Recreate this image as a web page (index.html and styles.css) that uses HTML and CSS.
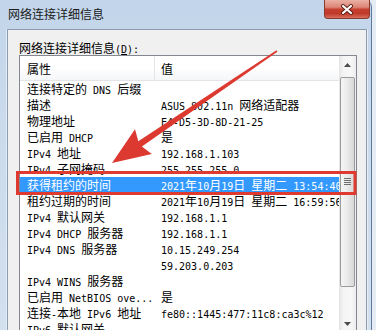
FILE: index.html
```html
<!DOCTYPE html>
<html lang="zh-CN">
<head>
<meta charset="utf-8">
<title>网络连接详细信息</title>
<link rel="stylesheet" href="styles.css">
</head>
<body>
<div class="window">
  <div class="titlebar">
    <div class="title">网络连接详细信息</div>
    <div class="close">
      <svg width="14" height="11" viewBox="0 0 14 11">
        <path d="M3 2 L11 9 M11 2 L3 9" stroke="#5a1e16" stroke-width="4" stroke-linecap="round"/>
        <path d="M3 2 L11 9 M11 2 L3 9" stroke="#ffffff" stroke-width="2.2" stroke-linecap="round"/>
      </svg>
    </div>
  </div>
  <div class="client">
    <div class="label">网络连接详细信息<span class="a">(<u>D</u>):</span></div>
    <div class="list">
      <div class="view">
        <div class="hdr"><div class="h1">属性</div><div class="h2">值</div></div>
        <div class="row"><div class="c1">连接特定的<span class="a"> DNS </span>后缀</div><div class="c2"></div></div>
        <div class="row"><div class="c1">描述</div><div class="c2"><span class="a">ASUS 802.11n </span>网络适配器</div></div>
        <div class="row"><div class="c1">物理地址</div><div class="c2"><span class="a">E4-D5-3D-8D-21-25</span></div></div>
        <div class="row"><div class="c1">已启用<span class="a"> DHCP</span></div><div class="c2">是</div></div>
        <div class="row"><div class="c1"><span class="a">IPv4 </span>地址</div><div class="c2"><span class="a">192.168.1.103</span></div></div>
        <div class="row"><div class="c1"><span class="a">IPv4 </span>子网掩码</div><div class="c2"><span class="a">255.255.255.0</span></div></div>
        <div class="row sel"><div class="c1">获得租约的时间</div><div class="c2"><span class="a">2021</span>年<span class="a">10</span>月<span class="a">19</span>日<span class="a"> </span>星期二<span class="a"> 13:54:40</span></div></div>
        <div class="row"><div class="c1">租约过期的时间</div><div class="c2"><span class="a">2021</span>年<span class="a">10</span>月<span class="a">19</span>日<span class="a"> </span>星期二<span class="a"> 16:59:56</span></div></div>
        <div class="row"><div class="c1"><span class="a">IPv4 </span>默认网关</div><div class="c2"><span class="a">192.168.1.1</span></div></div>
        <div class="row"><div class="c1"><span class="a">IPv4 DHCP </span>服务器</div><div class="c2"><span class="a">192.168.1.1</span></div></div>
        <div class="row"><div class="c1"><span class="a">IPv4 DNS </span>服务器</div><div class="c2"><span class="a">10.15.249.254</span></div></div>
        <div class="row"><div class="c1"></div><div class="c2"><span class="a">59.203.0.203</span></div></div>
        <div class="row"><div class="c1"><span class="a">IPv4 WINS </span>服务器</div><div class="c2"></div></div>
        <div class="row"><div class="c1">已启用<span class="a"> NetBIOS ove...</span></div><div class="c2">是</div></div>
        <div class="row"><div class="c1">连接<span class="a">-</span>本地<span class="a"> IPv6 </span>地址</div><div class="c2"><span class="a">fe80::1445:477:11c8:ca3c%12</span></div></div>
        <div class="row"><div class="c1"><span class="a">IPv6 </span>默认网关</div><div class="c2"></div></div>
      </div>
      <div class="sb">
        <div class="sbtn"><svg width="7" height="4" viewBox="0 0 7 4"><path d="M0 4 L3.5 0 L7 4 Z" fill="#4d4d4d"/></svg></div>
        <div class="track">
          <div class="thumb">
            <svg width="7" height="8" viewBox="0 0 7 8"><path d="M0 0.5 H7 M0 2.5 H7 M0 4.5 H7 M0 6.5 H7" stroke="#6e6e6e" stroke-width="1"/></svg>
          </div>
        </div>
        <div class="sbtn"><svg width="7" height="4" viewBox="0 0 7 4"><path d="M0 0 L7 0 L3.5 4 Z" fill="#4d4d4d"/></svg></div>
      </div>
    </div>
  </div>
  <svg class="annot" width="376" height="330" viewBox="0 0 376 330">
    <rect x="17.5" y="172.5" width="337.5" height="21" fill="none" stroke="#de3a30" stroke-width="3"/>
    <polygon points="276.5,50.3 277.4,51.7 141.9,146.5 151.8,154.1 112,163 135,129.3 138.3,141.3" fill="#dc3a30"/>
  </svg>
</div>
</body>
</html>
```
FILE: styles.css
```css
html, body {
  margin: 0;
  padding: 0;
}
body {
  background: #e6ecf3;
  width: 376px;
  height: 330px;
  overflow: hidden;
}
.window {
  position: relative;
  width: 371px;
  height: 330px;
  background: linear-gradient(to bottom, #c2d5ea, #cbdbec 40%, #d3e0ee);
  border-right: 1px solid #5d7a9c;
  border-top-right-radius: 7px;
  display: flex;
  flex-direction: column;
}
.titlebar {
  height: 29px;
  flex: none;
  display: flex;
  align-items: flex-start;
}
.title {
  padding: 6px 0 0 8px;
  font-family: "Noto Sans CJK SC", sans-serif;
  font-size: 12px;
  line-height: 16px;
  color: #1b1b1b;
}
.close {
  margin-left: auto;
  margin-right: 1px;
  width: 46px;
  height: 19px;
  box-sizing: border-box;
  border: 1px solid #8b3a2e;
  border-top: none;
  border-radius: 0 0 4px 4px;
  background: linear-gradient(to bottom, #eab1a4 0%, #dc8577 40%, #c6402f 52%, #c13a29 75%, #d7705f 100%);
  display: flex;
  align-items: center;
  justify-content: center;
}
.client {
  flex: 1;
  margin: 0 4px 0 7px;
  background: #f0f0f0;
  border: 1px solid #8b9cb0;
  border-bottom: none;
  padding: 10px 9px 0 11px;
  box-shadow: -1px 0 0 #e4ecf5, 1px 0 0 #e4ecf5;
}
.label {
  height: 15px;
  font-family: "Noto Sans CJK SC", sans-serif;
  font-size: 12px;
  line-height: 15px;
  color: #000;
  white-space: nowrap;
}
.a {
  font-family: "DejaVu Sans Mono", monospace;
  font-size: 10px;
}
.list {
  display: flex;
  height: 276px;
  border: 1px solid #828790;
  background: #fff;
  font-family: "Noto Sans CJK SC", sans-serif;
  font-size: 12px;
  color: #000;
}
.view {
  flex: 1;
  overflow: hidden;
}
.hdr {
  display: flex;
  height: 24px;
  border-bottom: 1px solid #e2e4e7;
  background: linear-gradient(to bottom, #ffffff, #ffffff 50%, #f5f6f8);
}
.h1 {
  width: 135px;
  flex: none;
  box-sizing: border-box;
  border-right: 1px solid #e2e4e7;
  padding: 2px 0 0 7px;
  line-height: 22px;
}
.h2 {
  padding: 2px 0 0 6px;
  line-height: 22px;
}
.row {
  display: flex;
  height: 16px;
  line-height: 16px;
  white-space: nowrap;
  overflow: hidden;
}
.c1 {
  width: 134px;
  flex: none;
  box-sizing: border-box;
  padding-left: 7px;
  overflow: hidden;
}
.c2 {
  flex: 1;
  padding-left: 7px;
  overflow: hidden;
}
.sel {
  background: #3399ff;
  color: #fff;
}
.sb {
  width: 17px;
  flex: none;
  display: flex;
  flex-direction: column;
  background: linear-gradient(to right, #e5e5e5, #f4f4f4 25%, #f7f7f7 70%, #ececec);
}
.sbtn {
  height: 17px;
  flex: none;
  display: flex;
  align-items: center;
  justify-content: center;
}
.track {
  flex: 1;
  padding-top: 4px;
}
.thumb {
  height: 210px;
  margin: 0 1px;
  box-sizing: border-box;
  border: 1px solid #9b9b9b;
  border-radius: 2px;
  background: linear-gradient(to right, #f5f5f5, #ebebeb 45%, #d8d8d8);
  display: flex;
  align-items: center;
  justify-content: center;
}
.annot {
  position: absolute;
  left: 0;
  top: 0;
  pointer-events: none;
}
```
